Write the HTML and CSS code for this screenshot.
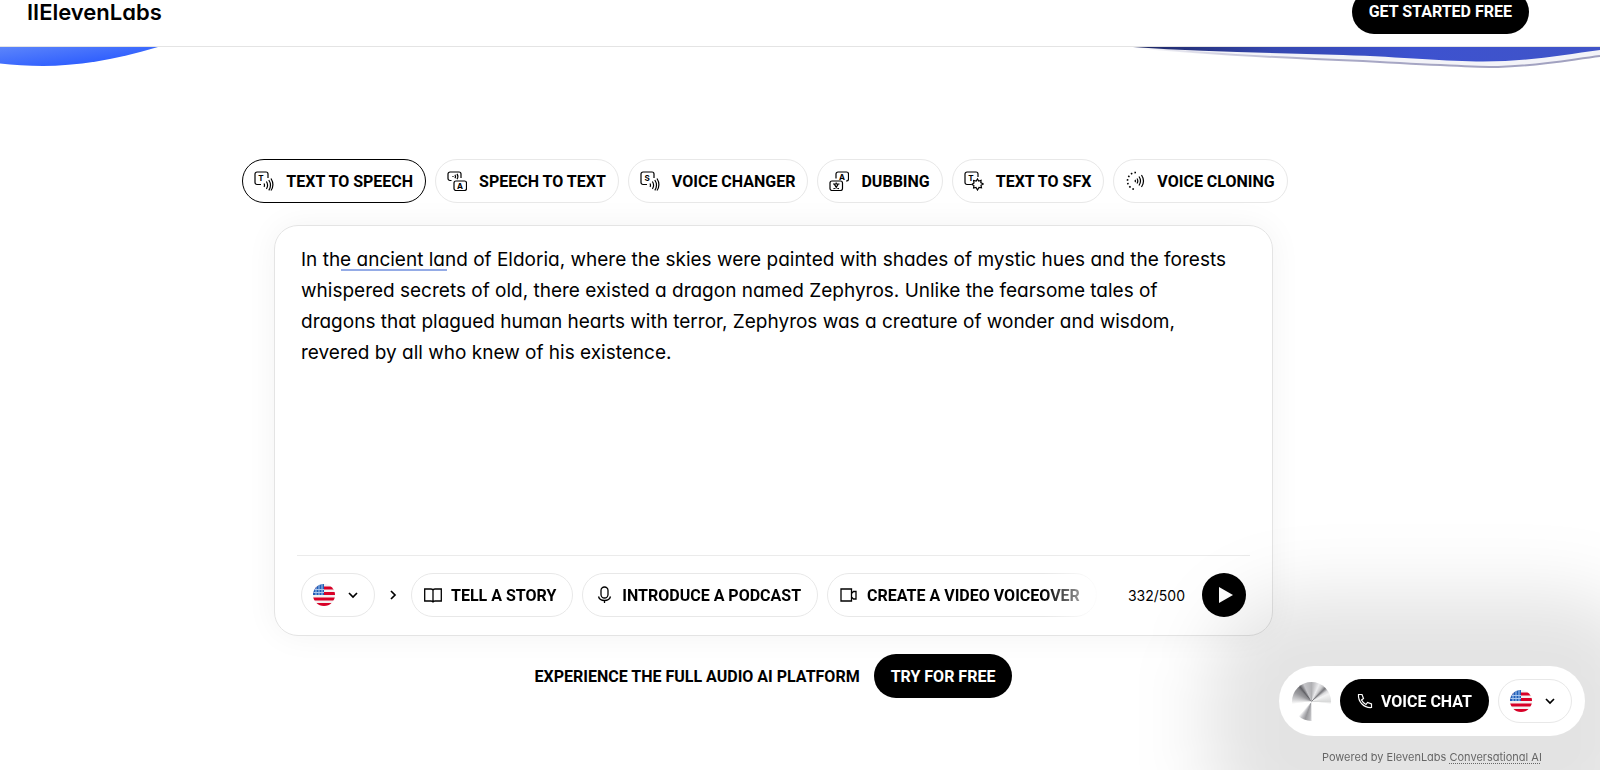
FILE: index.html
```
<!DOCTYPE html>
<html lang="en">
<head>
  <meta charset="UTF-8" />
  <meta name="viewport" content="width=device-width, initial-scale=1.0"/>
  <title>ElevenLabs</title>
  <link rel="stylesheet" href="styles.css">
</head>
<body>
  <!-- shared icons -->
  <svg class="sprite" aria-hidden="true">
    <symbol id="flag-us" viewBox="0 0 22 22">
      <clipPath id="round"><circle cx="11" cy="11" r="11"/></clipPath>
      <g clip-path="url(#round)">
        <rect width="22" height="22" fill="#f3f1f1"/>
        <path d="M0 4h22M0 9.500h22M0 15h22M0 20.500h22" stroke="#d80027" stroke-width="2.800"/>
        <rect width="11" height="11" fill="#1f5fb8"/>
        <path d="M0 5.500h11M0 8.500h11M3 2v9M6 0v11M9 0v11" stroke="#a9c6ee" stroke-width="1"/>
      </g>
    </symbol>
    <symbol id="chevron-down" viewBox="0 0 12 12">
      <path d="M2 4l4 4 4-4" fill="none" stroke="currentColor" stroke-width="1.700"/>
    </symbol>
    <symbol id="waves" viewBox="0 0 20 20">
      <path d="M10 12.500q1 1.700 0 3.400M12.400 10.500q2.400 3.700 0 7.400M14.800 9q3.400 5.200 0 10.400M17 7.500q3.800 6.300 0 12" fill="none" stroke="currentColor" stroke-width="1.200"/>
    </symbol>
  </svg>

  <header class="top-bar">
    <a class="logo" href="#">IIElevenLabs</a>
    <button class="btn-dark" type="button">GET STARTED FREE</button>
  </header>

  <div class="hero-waves">
    <svg width="158" height="22" viewBox="0 0 158 22" aria-hidden="true">
      <defs>
        <linearGradient id="blue" x1="0" y1="0" x2="1" y2="1">
          <stop offset="0" stop-color="#5c85fb"/>
          <stop offset="1" stop-color="#1d4fff"/>
        </linearGradient>
      </defs>
      <path d="M0 0H158C115 13 75 19 43 19C28 19 13 18 0 16.500Z" fill="url(#blue)"/>
    </svg>
    <svg width="467" height="22" viewBox="0 0 467 22" aria-hidden="true">
      <defs>
        <linearGradient id="indigo" x1="0" x2="1">
          <stop offset="0" stop-color="#1c2560"/>
          <stop offset=".3" stop-color="#3547b0"/>
          <stop offset=".6" stop-color="#3d52cf"/>
          <stop offset="1" stop-color="#4054c8"/>
        </linearGradient>
        <linearGradient id="edge" x1="0" x2="1">
          <stop offset="0" stop-color="#a9a9c6" stop-opacity="0"/>
          <stop offset=".4" stop-color="#a9a9c6"/>
          <stop offset="1" stop-color="#a0a0bf"/>
        </linearGradient>
      </defs>
      <path d="M0 0C70 7 150 11 230 14C300 18 340 20 365 20C405 19 435 13 467 9V0Z" fill="#f3f3f8"/>
      <path d="M0 0C70 7 150 11 230 14C300 18 340 20 365 20C405 19 435 13 467 9" fill="none" stroke="url(#edge)" stroke-width="2"/>
      <path d="M0 0C70 5 140 6 210 8C270 10 315 14.500 350 14.500C395 14.500 430 8 467 3V0Z" fill="url(#indigo)"/>
    </svg>
  </div>

  <main class="demo">
    <nav class="tabs">
      <button class="pill tab active" type="button">
        <svg class="icon" viewBox="0 0 20 20" aria-hidden="true">
          <path d="M7 13.500H3a2 2 0 0 1-2-2V3a2 2 0 0 1 2-2h9a2 2 0 0 1 2 2v4"/>
          <text x="7" y="10">T</text>
          <use href="#waves"/>
        </svg>
        TEXT TO SPEECH
      </button>
      <button class="pill tab" type="button">
        <svg class="icon" viewBox="0 0 20 20" aria-hidden="true">
          <path d="M4.500 9.500H3a2 2 0 0 1-2-2V3a2 2 0 0 1 2-2h9a2 2 0 0 1 2 2v4M6 5v1M8 3.800q1 1.700 0 3.400M10 2.800q1.800 2.700 0 5.400"/>
          <rect x="7" y="10" width="12.500" height="9.500" rx="2"/>
          <text x="13" y="18">A</text>
        </svg>
        SPEECH TO TEXT
      </button>
      <button class="pill tab" type="button">
        <svg class="icon" viewBox="0 0 20 20" aria-hidden="true">
          <path d="M7 13.500H3a2 2 0 0 1-2-2V3a2 2 0 0 1 2-2h9a2 2 0 0 1 2 2v4"/>
          <text x="7" y="10">S</text>
          <use href="#waves"/>
        </svg>
        VOICE CHANGER
      </button>
      <button class="pill tab" type="button">
        <svg class="icon" viewBox="0 0 20 20" aria-hidden="true">
          <path d="M7 7.500V3a2 2 0 0 1 2-2h8.500a2 2 0 0 1 2 2v5a2 2 0 0 1-2 2H17"/>
          <rect x="1" y="10" width="12.500" height="9.500" rx="2"/>
          <text x="13" y="8.500">A</text>
          <path d="M4 13h6.500M7.200 11.500V13M9 13.500q-1 3-4.500 4.200M5.500 13.500q1 3 4.500 4.200"/>
        </svg>
        DUBBING
      </button>
      <button class="pill tab" type="button">
        <svg class="icon" viewBox="0 0 20 20" aria-hidden="true">
          <path d="M7 13.500H3a2 2 0 0 1-2-2V3a2 2 0 0 1 2-2h9a2 2 0 0 1 2 2v3"/>
          <text x="7" y="10">T</text>
          <path d="M13.500 8l1.200 2 2.400-.7-.3 2.300 2.500 1.400-2.300 1.300.5 2.500-2.500-.3-1.500 2.500-1.500-2.500-2.400.5.300-2.500L7.800 13.500l2.200-1.500-.4-2.500 2.600.5z"/>
        </svg>
        TEXT TO SFX
      </button>
      <button class="pill tab" type="button">
        <svg class="icon" viewBox="0 0 20 20" aria-hidden="true">
          <path class="dots" d="M11 1.500A8.500 8.500 0 1 0 11 18.500"/>
          <path d="M10 8.800q.8 1.200 0 2.400M12 7.500q1.600 2.500 0 5M14 5.500q3 4.500 0 9M16.500 4q4 6 0 12"/>
        </svg>
        VOICE CLONING
      </button>
    </nav>

    <section class="card">
      <div class="editor">
        <textarea class="script" rows="10" spellcheck="false" aria-label="Text to speak">In the ancient land of Eldoria, where the skies were painted with shades of mystic hues and the forests whispered secrets of old, there existed a dragon named Zephyros. Unlike the fearsome tales of dragons that plagued human hearts with terror, Zephyros was a creature of wonder and wisdom, revered by all who knew of his existence.</textarea>
        <span class="progress-mark"></span>
      </div>

      <div class="toolbar">
        <label class="pill lang">
          <svg class="flag" aria-hidden="true"><use href="#flag-us"/></svg>
          <svg class="chevron" aria-hidden="true"><use href="#chevron-down"/></svg>
          <select aria-label="Voice language"><option>English</option></select>
        </label>
        <button class="more" type="button" aria-label="More">
          <svg class="chevron" viewBox="0 0 12 12" aria-hidden="true"><path d="M4 2l4 4-4 4" fill="none" stroke="currentColor" stroke-width="1.700"/></svg>
        </button>
        <div class="chips">
          <button class="pill chip" type="button">
            <svg class="icon-sm" viewBox="0 0 18 18" aria-hidden="true"><path d="M9 4.500Q9 3 7 3H.7v12H7q2 0 2 1.500M9 4.500Q9 3 11 3h6.300v12H11q-2 0-2 1.500zv12"/></svg>
            TELL A STORY
          </button>
          <button class="pill chip" type="button">
            <svg class="icon-sm" viewBox="0 0 18 18" aria-hidden="true"><rect x="6" y="1" width="7" height="11" rx="3.500"/><path d="M3.500 10.500Q4.500 14.500 9.500 14.500t6-4M9.500 14.500V17"/></svg>
            INTRODUCE A PODCAST
          </button>
          <button class="pill chip" type="button">
            <svg class="icon-sm" viewBox="0 0 18 18" aria-hidden="true"><path d="M1 3h10.500v12H1zM11.500 7.500l2-2H16v7.500h-2.500l-2-2"/></svg>
            CREATE A VIDEO VOICEOVER
          </button>
        </div>
        <span class="count">332/500</span>
        <button class="play" type="button" aria-label="Play">
          <svg width="14" height="16" viewBox="0 0 14 16" aria-hidden="true"><path d="M0 0l14 8-14 8z" fill="#fff"/></svg>
        </button>
      </div>
    </section>

    <div class="cta">
      <span>EXPERIENCE THE FULL AUDIO AI PLATFORM</span>
      <button class="btn-dark" type="button">TRY FOR FREE</button>
    </div>
  </main>

  <aside class="widget">
    <div class="widget-bar">
      <span class="orb"></span>
      <button class="btn-dark call" type="button">
        <svg width="16" height="16" viewBox="0 0 16 16" aria-hidden="true"><path d="M1.500 1.500H5l1.500 4-2 1.500q1.500 3 4.500 4.500l1.500-2 4 1.500v3.500Q9 15 5 11T1.500 1.500z"/></svg>
        VOICE CHAT
      </button>
      <label class="pill lang">
        <svg class="flag" aria-hidden="true"><use href="#flag-us"/></svg>
        <svg class="chevron" aria-hidden="true"><use href="#chevron-down"/></svg>
        <select aria-label="Chat language"><option>English</option></select>
      </label>
    </div>
    <p class="powered">Powered by ElevenLabs <a href="#">Conversational AI</a></p>
  </aside>
</body>
</html>
```

FILE: styles.css
```
:root {
  --line: #e8e8e8;
  --label-font: Roboto, "Liberation Sans", sans-serif;
  --text-font: Inter, "Liberation Sans", sans-serif;
}

* {
  box-sizing: border-box;
}

body {
  margin: 0;
  font-family: var(--text-font);
  font-feature-settings: "cv11";
  color: #000;
  background: #fff;
}

button {
  font: inherit;
  color: inherit;
  background: none;
  border: none;
  padding: 0;
  cursor: pointer;
}

.sprite {
  position: absolute;
  width: 0;
  height: 0;
}

/* header */
.top-bar {
  display: flex;
  justify-content: space-between;
  align-items: center;
  height: 70px;
  margin-top: -23px;
  padding: 0 71px 0 27px;
  border-bottom: 1px solid #e4e4e4;
}

.logo {
  font-size: 22px;
  font-weight: 600;
  color: #000;
  text-decoration: none;
}

.btn-dark {
  height: 44px;
  padding: 0 17px;
  border-radius: 22px;
  background: #000;
  color: #fff;
  font-family: var(--label-font);
  font-size: 16px;
  font-weight: 700;
  white-space: nowrap;
}

.hero-waves {
  display: flex;
  justify-content: space-between;
  height: 22px;
}

/* demo */
.demo {
  display: flex;
  flex-direction: column;
  align-items: center;
  padding: 90px 53px 0 0;
}

.tabs {
  display: flex;
  gap: 9px;
  padding-right: 17px;
}

.pill {
  display: flex;
  align-items: center;
  flex-shrink: 0;
  height: 44px;
  border: 1px solid var(--line);
  border-radius: 22px;
  font-family: var(--label-font);
  font-size: 16px;
  font-weight: 700;
  white-space: nowrap;
}

.tab {
  gap: 12px;
  padding: 0 12px 0 11px;
}

.tab.active {
  border-color: #000;
}

.icon {
  width: 20px;
  height: 20px;
  fill: none;
  stroke: #000;
  stroke-width: 1.2;
}

.icon text {
  font: 700 8px var(--text-font);
  text-anchor: middle;
  fill: #000;
  stroke: none;
}

.icon .dots {
  stroke-width: 1.6;
  stroke-dasharray: 1.6 2.2;
}

.card {
  width: 100%;
  max-width: 999px;
  margin-top: 22px;
  padding: 18px 22px;
  border: 1px solid #e4e4e4;
  border-radius: 24px;
  box-shadow: 0 0 32px rgba(0, 0, 0, 0.05);
}

.editor {
  position: relative;
  padding-bottom: 1px;
  border-bottom: 1px solid #ebebeb;
}

.script {
  display: block;
  width: 100%;
  padding: 0 20px 0 4px;
  border: none;
  outline: none;
  resize: none;
  overflow: hidden;
  background: none;
  color: #000;
  font-family: inherit;
  font-feature-settings: inherit;
  font-size: 19px;
  line-height: 31px;
}

.progress-mark {
  position: absolute;
  top: 25px;
  left: 44px;
  width: 106px;
  height: 2px;
  background: #94abe6;
}

.toolbar {
  display: flex;
  align-items: center;
  padding: 17px 4px 0;
}

.lang {
  position: relative;
  gap: 12px;
  width: 74px;
  padding: 0 11px;
}

.lang select {
  position: absolute;
  inset: 0;
  width: 100%;
  opacity: 0;
}

.flag {
  width: 22px;
  height: 22px;
}

.chevron {
  display: block;
  width: 12px;
  height: 12px;
}

.more {
  padding: 12px;
}

.chips {
  display: flex;
  flex: 1;
  gap: 9px;
  min-width: 0;
  overflow: hidden;
  mask-image: linear-gradient(to right, #000 calc(100% - 60px), transparent);
}

.chip {
  gap: 9px;
  padding: 0 16px 0 12px;
}

.icon-sm {
  width: 18px;
  height: 18px;
  fill: none;
  stroke: #000;
  stroke-width: 1.3;
}

.count {
  padding: 0 17px 0 24px;
  font-size: 14px;
}

.play {
  display: grid;
  place-items: center;
  width: 44px;
  height: 44px;
  padding-left: 3px;
  border-radius: 50%;
  background: #000;
}

.cta {
  display: flex;
  align-items: center;
  gap: 14px;
  margin-top: 18px;
  font-family: var(--label-font);
  font-size: 16px;
  font-weight: 700;
}

/* floating voice widget */
.widget {
  position: fixed;
  right: 15px;
  bottom: 5px;
  text-align: center;
}

.widget::before {
  content: "";
  position: absolute;
  inset: -72px -66px -80px -70px;
  z-index: -1;
  border-radius: 90px;
  background: rgba(0, 0, 0, 0.11);
  filter: blur(36px);
}

.widget-bar {
  display: flex;
  align-items: center;
  gap: 9px;
  padding: 13px;
  border-radius: 35px;
  background: #fff;
}

.orb {
  width: 39px;
  height: 39px;
  border-radius: 50%;
  background: conic-gradient(#b0b0b3 0deg, #ececee 24deg, #c8c8ca 36deg, #77777b 46deg, #d8d8da 56deg, #f4f4f4 66deg, #d9dada 90deg, #fff 98deg, #fff 178deg, #bbbbbe 184deg, #96969a 200deg, #c4c4c8 212deg, #fff 222deg, #fff 262deg, #d4d4d6 276deg, #98989c 300deg, #88888c 314deg, #5f5f64 322deg, #c4c4c8 336deg, #b0b0b3 360deg);
}

.call {
  display: flex;
  align-items: center;
  gap: 8px;
}

.call svg {
  fill: none;
  stroke: #fff;
  stroke-width: 1.2;
}

.powered {
  margin: 13px 0 0;
  font-size: 11px;
  line-height: 16px;
  color: #666;
}

.powered a {
  color: inherit;
  text-decoration: underline dotted;
  text-underline-offset: 2px;
}

@media (max-width: 1060px) {
  .demo {
    padding: 40px 16px 0;
  }

  .tabs {
    flex-wrap: wrap;
    padding-right: 0;
  }
}
```
